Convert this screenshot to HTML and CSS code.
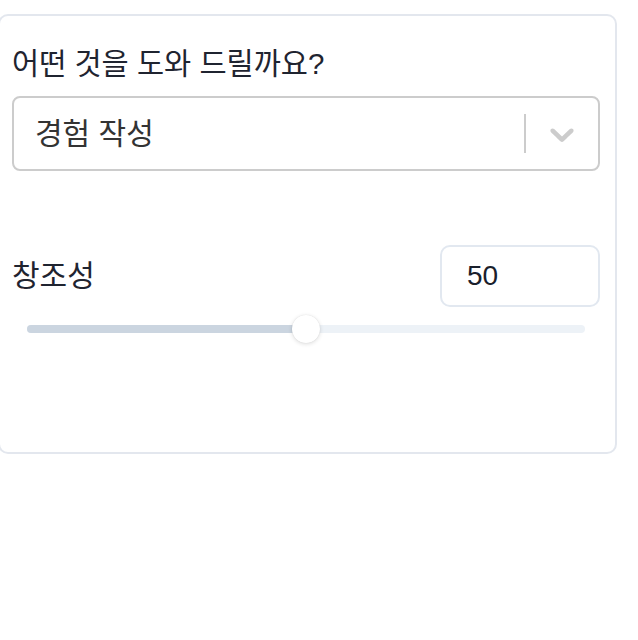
FILE: index.html
```html
<!DOCTYPE html>
<html lang="ko">
<head>
<meta charset="utf-8">
<link rel="stylesheet" href="styles.css">
</head>
<body>
<div class="card">
  <div class="label">어떤 것을 도와 드릴까요?</div>
  <div class="select">
    <div class="select-value">경험 작성</div>
    <div class="select-indicators">
      <span class="separator"></span>
      <div class="indicator">
        <svg viewBox="0 0 20 20" width="40" height="40" aria-hidden="true"><path fill="#cccccc" d="M4.516 7.548c0.436-0.446 1.043-0.481 1.576 0l3.908 3.747 3.908-3.747c0.533-0.481 1.141-0.446 1.574 0 0.436 0.445 0.408 1.197 0 1.615-0.406 0.418-4.695 4.502-4.695 4.502-0.217 0.223-0.502 0.335-0.787 0.335s-0.57-0.112-0.789-0.335c0 0-4.287-4.084-4.695-4.502s-0.436-1.170 0-1.615z"/></svg>
      </div>
    </div>
  </div>
  <div class="slider-row">
    <div class="slider-label">창조성</div>
    <div class="number-input">50</div>
  </div>
  <div class="slider">
    <div class="track">
      <div class="fill" style="width:50%"></div>
      <div class="thumb" style="left:50%"></div>
    </div>
  </div>
</div>
</body>
</html>
```

FILE: styles.css
```css
html, body {
  margin: 0;
  padding: 0;
  background: #ffffff;
}
body {
  font-family: "Liberation Sans", "Noto Sans CJK KR", sans-serif;
  color: #1a202c;
}
.card {
  box-sizing: border-box;
  width: 619px;
  margin: 14px 0 0 -2px;
  border: 2px solid #e3e7ee;
  border-radius: 10px;
  padding: 30px 15px 109px 12px;
}
.label {
  font-size: 29.5px;
  line-height: 36px;
  color: #1f2430;
}
.select {
  box-sizing: border-box;
  margin-top: 14px;
  height: 75px;
  border: 2px solid #cccccc;
  border-radius: 8px;
  display: flex;
  align-items: center;
}
.select-value {
  flex: 1;
  padding: 0 16px 0 21px;
  font-size: 30px;
  line-height: 40px;
  color: #333333;
}
.select-indicators {
  display: flex;
  align-items: stretch;
  align-self: stretch;
}
.separator {
  width: 2px;
  background: #cccccc;
  margin: 16px 0;
}
.indicator {
  display: flex;
  align-items: center;
  padding: 0 16px;
}
.indicator svg {
  display: block;
}
.slider-row {
  margin-top: 74px;
  display: flex;
  align-items: center;
  justify-content: space-between;
}
.slider-label {
  font-size: 30px;
  line-height: 40px;
  color: #1f2430;
}
.number-input {
  box-sizing: border-box;
  width: 160px;
  height: 62px;
  border: 2px solid #e2e8f0;
  border-radius: 10px;
  padding-left: 25px;
  display: flex;
  align-items: center;
  font-size: 28px;
  color: #1a202c;
}
.slider {
  margin-top: 8px;
  height: 28px;
  padding: 0 15px;
  display: flex;
  align-items: center;
}
.track {
  position: relative;
  flex: 1;
  height: 8px;
  border-radius: 4px;
  background: #edf2f7;
}
.fill {
  height: 100%;
  border-radius: 4px 0 0 4px;
  background: #cbd5e0;
}
.thumb {
  position: absolute;
  top: 50%;
  width: 28px;
  height: 28px;
  margin: -14px 0 0 -14px;
  border-radius: 50%;
  background: #ffffff;
  box-shadow: 0 1px 4px rgba(0, 0, 0, 0.14), 0 0 1px rgba(0, 0, 0, 0.12);
}
```
